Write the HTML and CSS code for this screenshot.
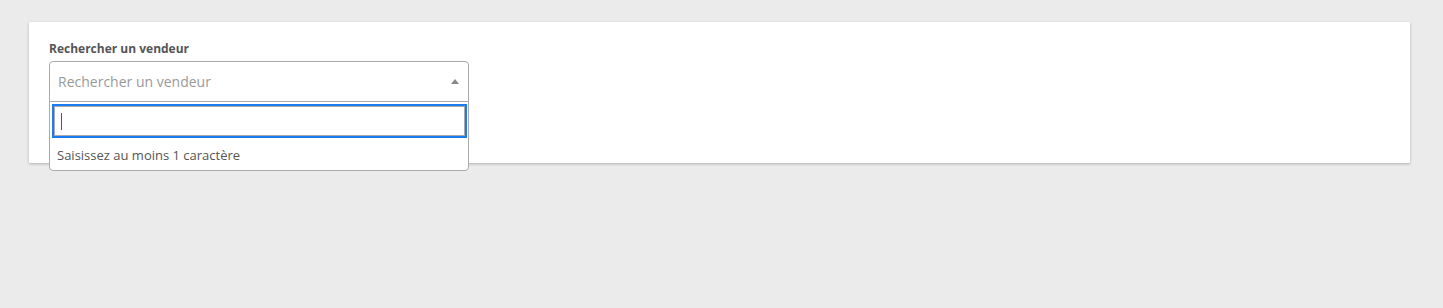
FILE: index.html
```html
<!DOCTYPE html>
<html lang="fr">
<head>
<meta charset="utf-8">
<link rel="stylesheet" href="styles.css">
</head>
<body>
<div class="page">
  <div class="card">
    <div class="field">
      <label class="label">Rechercher un vendeur</label>
      <div class="select">
        <div class="select-box">
          <span class="placeholder">Rechercher un vendeur</span>
          <span class="arrow"></span>
        </div>
        <div class="dropdown">
          <div class="search-wrap"><div class="search"><span class="caret"></span></div></div>
          <div class="message">Saisissez au moins 1 caractère</div>
        </div>
      </div>
    </div>
  </div>
</div>
</body>
</html>
```
FILE: styles.css
```css
html, body { margin: 0; padding: 0; }
body {
  background: #ebebeb;
  font-family: "Open Sans", "Liberation Sans", sans-serif;
  width: 1443px;
  height: 308px;
  overflow: hidden;
}
.page {
  padding: 22px 33px 0 29px;
}
.card {
  background: #fff;
  height: 141px;
  box-sizing: border-box;
  padding: 18px 20px 0 20px;
  box-shadow: 0 1px 3px rgba(0,0,0,0.25);
  border-radius: 1px;
}
.label {
  display: block;
  font-size: 12px;
  font-weight: 700;
  color: #555;
  line-height: 17px;
  margin-bottom: 4px;
}
.select {
  position: relative;
  width: 420px;
}
.select-box {
  box-sizing: border-box;
  height: 41px;
  border: 1px solid #aaa;
  border-radius: 4px 4px 0 0;
  display: flex;
  align-items: center;
  justify-content: space-between;
  padding: 0 9px 0 8px;
}
.placeholder {
  font-size: 14px;
  color: #999;
}
.arrow {
  width: 0; height: 0;
  border-left: 4px solid transparent;
  border-right: 4px solid transparent;
  border-bottom: 5px solid #888;
}
.dropdown {
  position: absolute;
  left: 0; right: 0;
  top: 40px;
  box-sizing: border-box;
  background: #fff;
  border: 1px solid #aaa;
  border-radius: 0 0 4px 4px;
  padding: 4px 2px 0 3px;
  height: 70px;
}
.search {
  box-sizing: border-box;
  height: 30px;
  border: 1px solid #aaa;
  outline: 2px solid #1a7cf0;
  margin: 0 1px;
  display: flex;
  align-items: center;
  padding-left: 6px;
}
.caret {
  width: 1px;
  height: 17px;
  background: #555;
}
.message {
  font-size: 13px;
  color: #555;
  padding: 10px 5px 0 4px;
  line-height: 18px;
}
```
